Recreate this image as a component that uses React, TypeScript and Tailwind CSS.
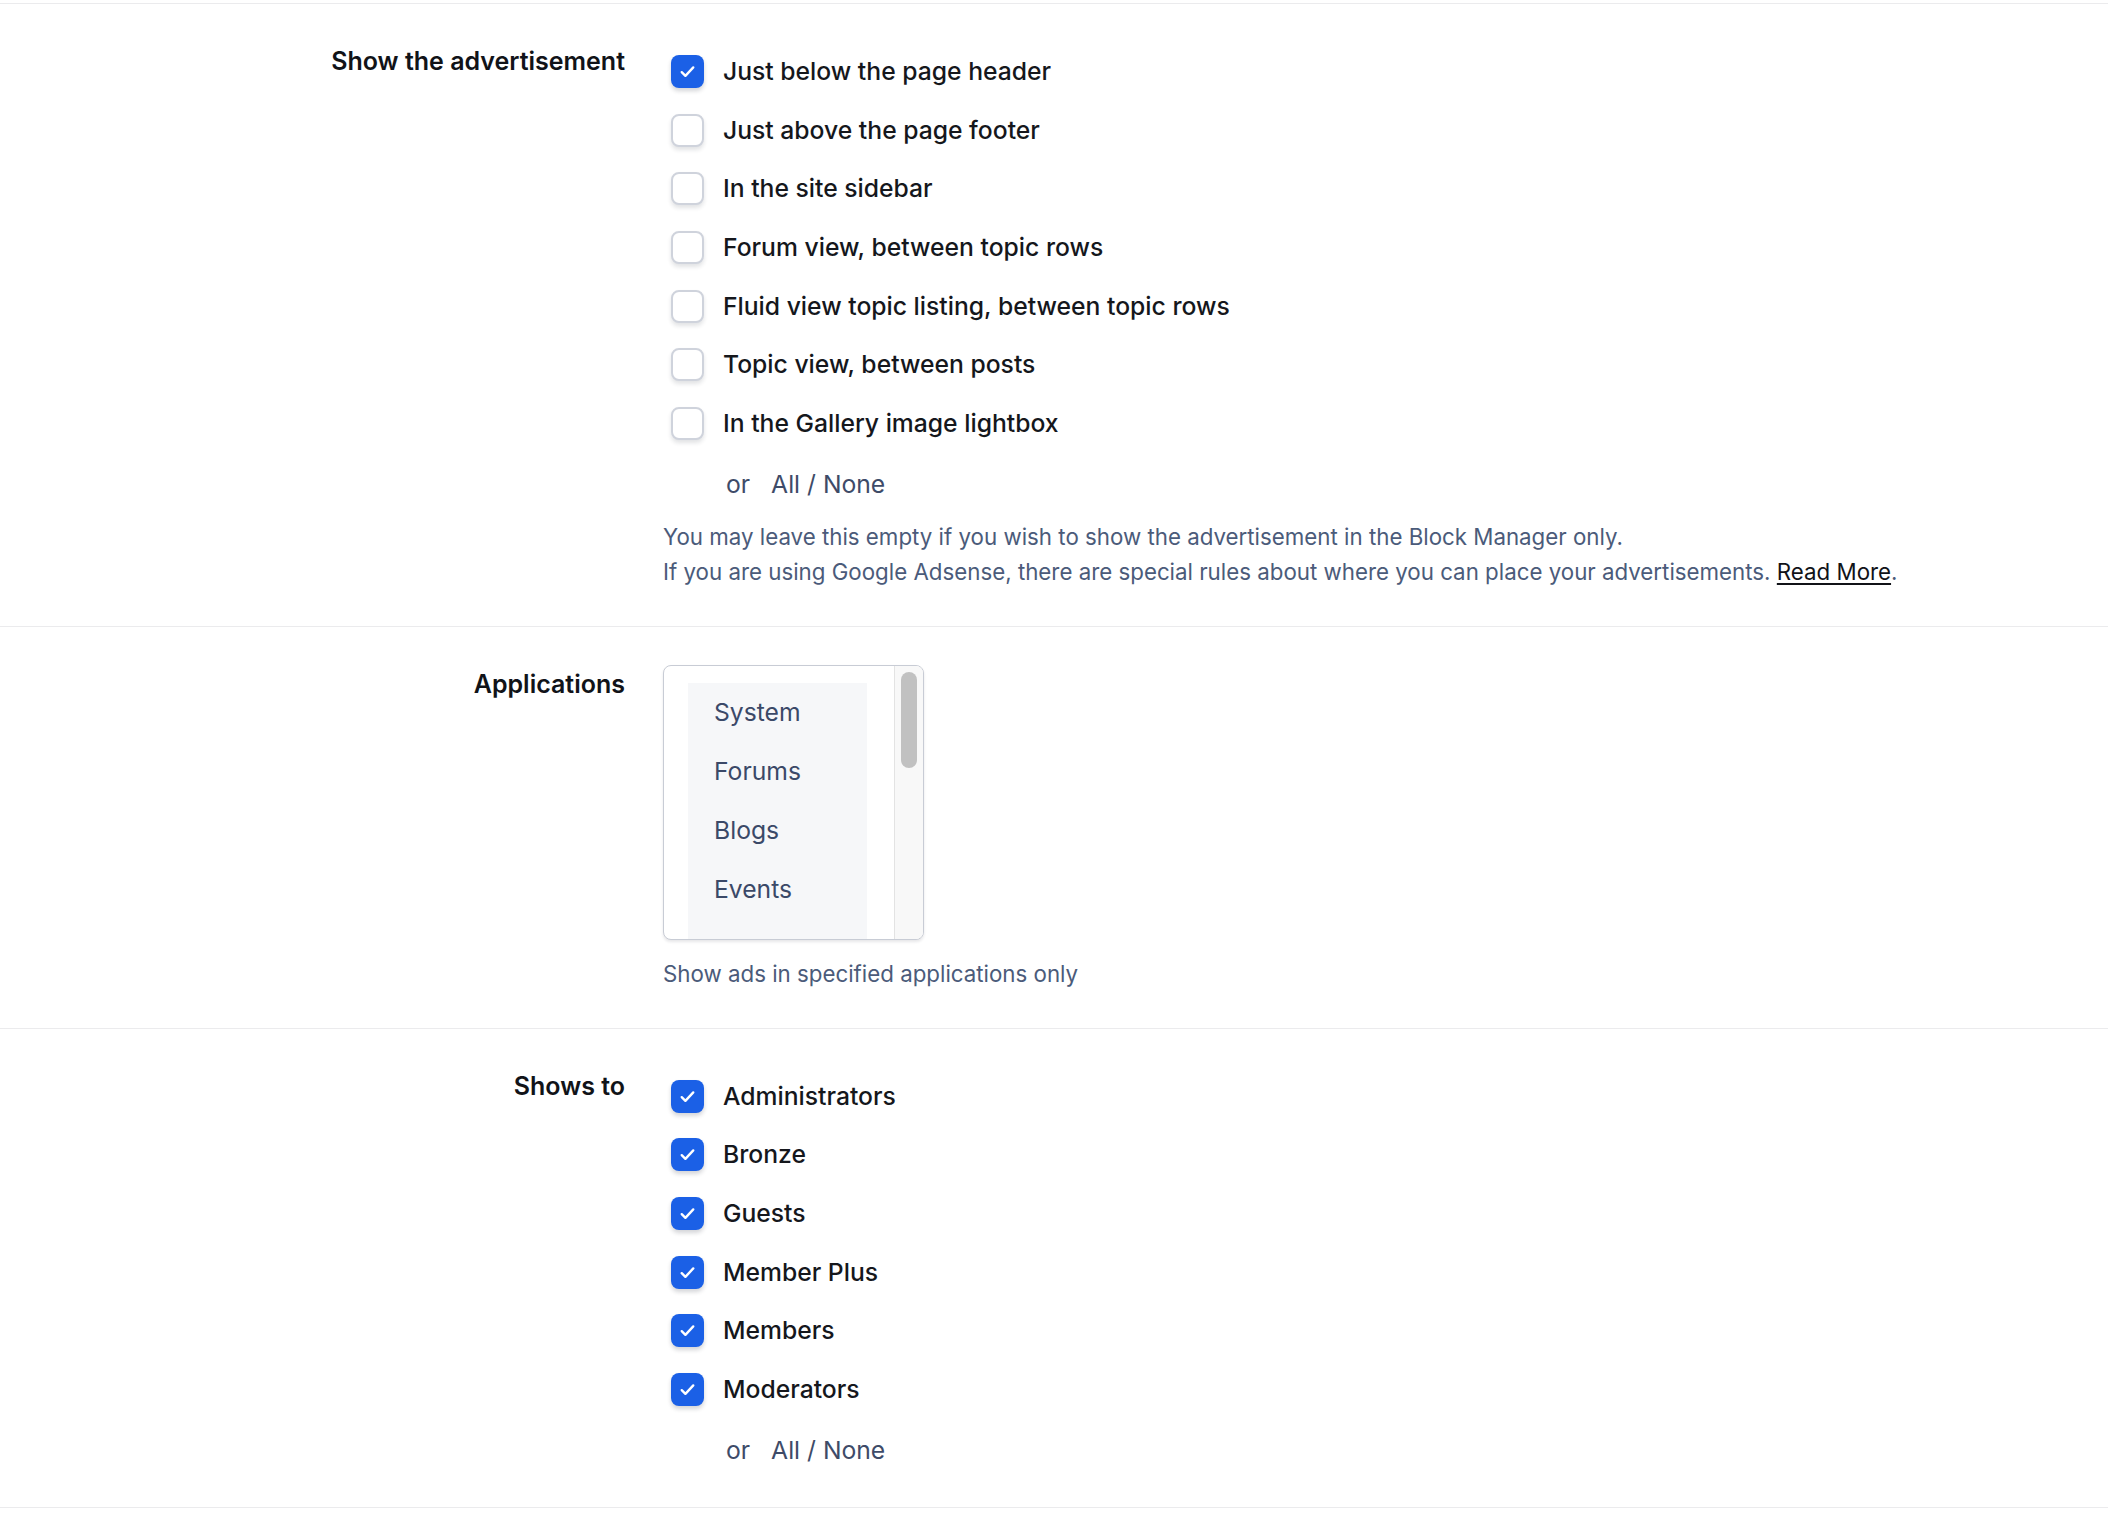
import { FC, ReactNode } from "react";

type CheckOption = {
  label: string;
  checked: boolean;
};

const placements: CheckOption[] = [
  { label: "Just below the page header", checked: true },
  { label: "Just above the page footer", checked: false },
  { label: "In the site sidebar", checked: false },
  { label: "Forum view, between topic rows", checked: false },
  { label: "Fluid view topic listing, between topic rows", checked: false },
  { label: "Topic view, between posts", checked: false },
  { label: "In the Gallery image lightbox", checked: false },
];

const groups: CheckOption[] = [
  { label: "Administrators", checked: true },
  { label: "Bronze", checked: true },
  { label: "Guests", checked: true },
  { label: "Member Plus", checked: true },
  { label: "Members", checked: true },
  { label: "Moderators", checked: true },
];

const applications = ["System", "Forums", "Blogs", "Events"];

const CheckIcon = () => (
  <svg viewBox="0 0 16 16" className="h-[21px] w-[21px]" fill="none">
    <path
      d="M3.6 8.5l2.8 2.8 6-6.4"
      stroke="white"
      strokeWidth="1.8"
      strokeLinecap="round"
      strokeLinejoin="round"
    />
  </svg>
);

const Checkbox: FC<{ checked: boolean }> = ({ checked }) =>
  checked ? (
    <span className="flex h-[33px] w-[33px] items-center justify-center rounded-[8px] bg-[#1b60e6] shadow-[0_3px_4px_rgba(17,24,39,0.18)]">
      <CheckIcon />
    </span>
  ) : (
    <span className="h-[33px] w-[33px] rounded-[8px] border-2 border-[#cfd3dc] bg-white shadow-[0_3px_4px_rgba(17,24,39,0.12)]" />
  );

const CheckList: FC<{ items: CheckOption[] }> = ({ items }) => (
  <div>
    {items.map((item) => (
      <label
        key={item.label}
        className="flex h-[58.7px] cursor-pointer items-center gap-[19px] pl-[8px]"
      >
        <Checkbox checked={item.checked} />
        <span className="text-[24.7px] font-medium text-[#15171c]">
          {item.label}
        </span>
      </label>
    ))}
    <div className="mt-[10px] flex h-[44px] items-center gap-[21px] pl-[63px] text-[24.7px] text-[#3e4b68]">
      <span>or</span>
      <a className="cursor-pointer">All / None</a>
    </div>
  </div>
);

const FieldRow: FC<{ label: string; children: ReactNode; className?: string }> = ({
  label,
  children,
  className,
}) => (
  <div
    className={`grid grid-cols-[625px_1fr] gap-[38px] border-b border-[#ebebed] pt-[38px] ${className ?? ""}`}
  >
    <div className="mt-[3px] text-right text-[25px] leading-[32px] font-semibold text-[#111318]">
      {label}
    </div>
    <div>{children}</div>
  </div>
);

const Description: FC<{ children: ReactNode; className?: string }> = ({
  children,
  className,
}) => (
  <p className={`text-[22.3px] leading-[35px] text-[#4b5b7a] ${className ?? ""}`}>
    {children}
  </p>
);

export default function App() {
  return (
    <div className="min-h-screen bg-white font-['Inter','Noto_Sans',sans-serif] antialiased">
      <div className="mt-[3px] border-t border-[#ebebed]">
        <FieldRow label="Show the advertisement" className="pb-[37px]">
          <CheckList items={placements} />
          <Description className="mt-[12px]">
            You may leave this empty if you wish to show the advertisement in
            the Block Manager only.
            <br />
            If you are using Google Adsense, there are special rules about
            where you can place your advertisements.{" "}
            <a className="cursor-pointer text-[#111318] underline underline-offset-[3px]">
              Read More
            </a>
            .
          </Description>
        </FieldRow>

        <FieldRow label="Applications" className="pb-[37px]">
          <div className="flex h-[275px] w-[261px] overflow-hidden rounded-[8px] border border-[#c8ccd5] bg-white shadow-[0_2px_3px_rgba(17,24,39,0.1)]">
            <div className="flex-1 pt-[17px] pl-[24px]">
              <ul className="h-full w-[179px] bg-[#f6f7f9]">
                {applications.map((app) => (
                  <li
                    key={app}
                    className="flex h-[59px] items-center pl-[26px] text-[24.7px] text-[#3b4968]"
                  >
                    {app}
                  </li>
                ))}
              </ul>
            </div>
            <div className="w-[29px] border-l border-[#e3e3e3] bg-[#f8f8f8] pt-[6px] pl-[6px]">
              <div className="h-[96px] w-[16px] rounded-full bg-[#c1c1c1]" />
            </div>
          </div>
          <Description className="mt-[16px]">
            Show ads in specified applications only
          </Description>
        </FieldRow>

        <FieldRow label="Shows to" className="pb-[34px]">
          <CheckList items={groups} />
        </FieldRow>
      </div>
    </div>
  );
}
